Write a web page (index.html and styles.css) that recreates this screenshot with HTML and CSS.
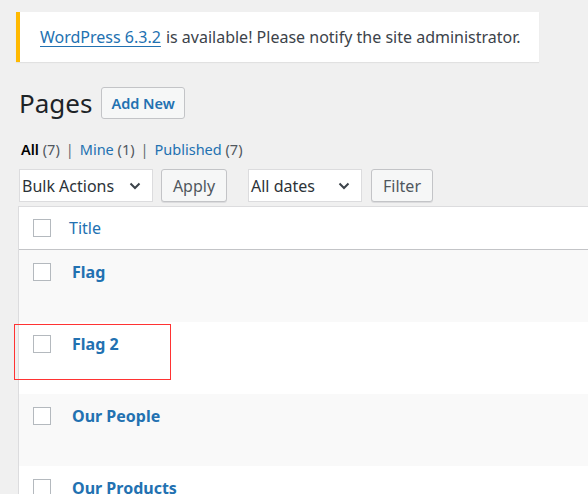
FILE: index.html
```html
<!DOCTYPE html>
<html>
<head>
<meta charset="utf-8">
<link rel="stylesheet" href="styles.css">
</head>
<body>
<div class="wrap">
  <div class="notice"><a href="#">WordPress 6.3.2</a> is available! Please notify the site administrator.</div>
  <div class="heading">
    <h1>Pages</h1>
    <a class="btn-add" href="#">Add New</a>
  </div>
  <ul class="subsubsub">
    <li><b class="current">All</b> <span class="count">(7)</span><span class="sep">|</span></li>
    <li><a href="#">Mine</a> <span class="count">(1)</span><span class="sep">|</span></li>
    <li><a href="#">Published</a> <span class="count">(7)</span></li>
  </ul>
  <div class="tablenav">
    <div class="select sel-bulk"><span>Bulk Actions</span><svg width="12" height="8" viewBox="0 0 12 8"><path d="M1.5 1.5 L6 6 L10.5 1.5" fill="none" stroke="#3c434a" stroke-width="2"/></svg></div>
    <button class="btn btn-apply">Apply</button>
    <div class="select sel-dates"><span>All dates</span><svg width="12" height="8" viewBox="0 0 12 8"><path d="M1.5 1.5 L6 6 L10.5 1.5" fill="none" stroke="#3c434a" stroke-width="2"/></svg></div>
    <button class="btn btn-filter">Filter</button>
  </div>
  <div class="table-wrap">
    <div class="table">
      <div class="row head"><span class="cb"></span><a class="col-title" href="#">Title</a></div>
      <div class="row alt"><span class="cb"></span><a class="row-title" href="#">Flag</a></div>
      <div class="row"><span class="cb"></span><a class="row-title" href="#">Flag 2</a></div>
      <div class="row alt"><span class="cb"></span><a class="row-title" href="#">Our People</a></div>
      <div class="row"><span class="cb"></span><a class="row-title" href="#">Our Products</a></div>
    </div>
    <div class="highlight"></div>
  </div>
</div>
</body>
</html>
```
FILE: styles.css
```css
* { box-sizing: border-box; }
html, body { margin: 0; padding: 0; }
body {
  background: #f0f0f0;
  font-family: "Noto Sans", "Open Sans", sans-serif;
  color: #3c434a;
  overflow: hidden;
  width: 588px;
  height: 494px;
}
a { color: #2271b1; text-decoration: none; }
.wrap { padding: 12px 0 0 16px; }
.notice {
  width: 523px;
  height: 50px;
  background: #fff;
  border-left: 4px solid #ffb900;
  box-shadow: 0 1px 1px rgba(0,0,0,0.06);
  padding: 0 0 0 20px;
  display: flex;
  align-items: center;
  font-size: 16px;
  white-space: nowrap;
}
.notice a { text-decoration: underline; text-underline-offset: 3px; margin-right: 5px; }
.heading {
  display: flex;
  align-items: center;
  margin-top: 25px;
  margin-left: 3px;
  height: 32px;
}
.heading h1 {
  margin: 0;
  font-size: 26px;
  font-weight: 400;
  color: #1d2327;
}
.btn-add {
  margin-left: 9px;
  height: 32px;
  padding: 0 9px;
  border: 1px solid #c3c4c7;
  border-radius: 3px;
  background: #f6f7f7;
  font-size: 14.5px;
  font-weight: 600;
  display: flex;
  align-items: center;
}
.subsubsub {
  list-style: none;
  margin: 19px 0 0 5px;
  padding: 0;
  display: flex;
  font-size: 14.5px;
  height: 22px;
  align-items: center;
}
.subsubsub li { white-space: nowrap; }
.current { color: #000; font-weight: 600; }
.count { color: #50575e; }
.sep { color: #646970; margin: 0 6px 0 6px; }
.tablenav {
  display: flex;
  margin-top: 9px;
  margin-left: 3px;
  height: 33px;
  align-items: stretch;
}
.select {
  background: #fff;
  border: 1px solid #dcdcde;
  display: flex;
  align-items: center;
  justify-content: space-between;
  padding: 0 11px 0 2px;
  font-size: 16px;
  color: #2c3338;
}
.sel-bulk { width: 134px; }
.sel-dates { width: 114px; margin-left: 21px; }
.btn {
  font-family: inherit;
  font-size: 16px;
  color: #50575e;
  background: #f6f7f7;
  border: 1px solid #c3c4c7;
  border-radius: 3px;
  box-shadow: 0 1px 0 #dcdcde;
  padding: 0;
}
.btn-apply { width: 66px; margin-left: 8px; }
.btn-filter { width: 62px; margin-left: 9px; }
.table-wrap { position: relative; margin-top: 4px; margin-left: 2px; }
.table {
  width: 700px;
  background: #fff;
  border: 1px solid #dcdcde;
}
.row {
  display: flex;
  align-items: flex-start;
  height: 72px;
  padding: 13px 0 0 14px;
}
.row.head {
  height: 43px;
  padding-top: 12px;
  border-bottom: 1px solid #c3c4c7;
}
.row.alt { background: #f9f9f9; }
.cb {
  width: 18px;
  height: 18px;
  border: 1px solid #b4b9be;
  background: #fff;
  flex: none;
}
.col-title { margin-left: 18px; font-size: 16px; line-height: 18px; }
.row-title {
  margin-left: 21px;
  font-size: 16px;
  font-weight: 700;
  line-height: 16px;
  margin-top: 1px;
}
.highlight {
  position: absolute;
  left: -4px;
  top: 118px;
  width: 157px;
  height: 56px;
  border: 1px solid #f33;
}
```
